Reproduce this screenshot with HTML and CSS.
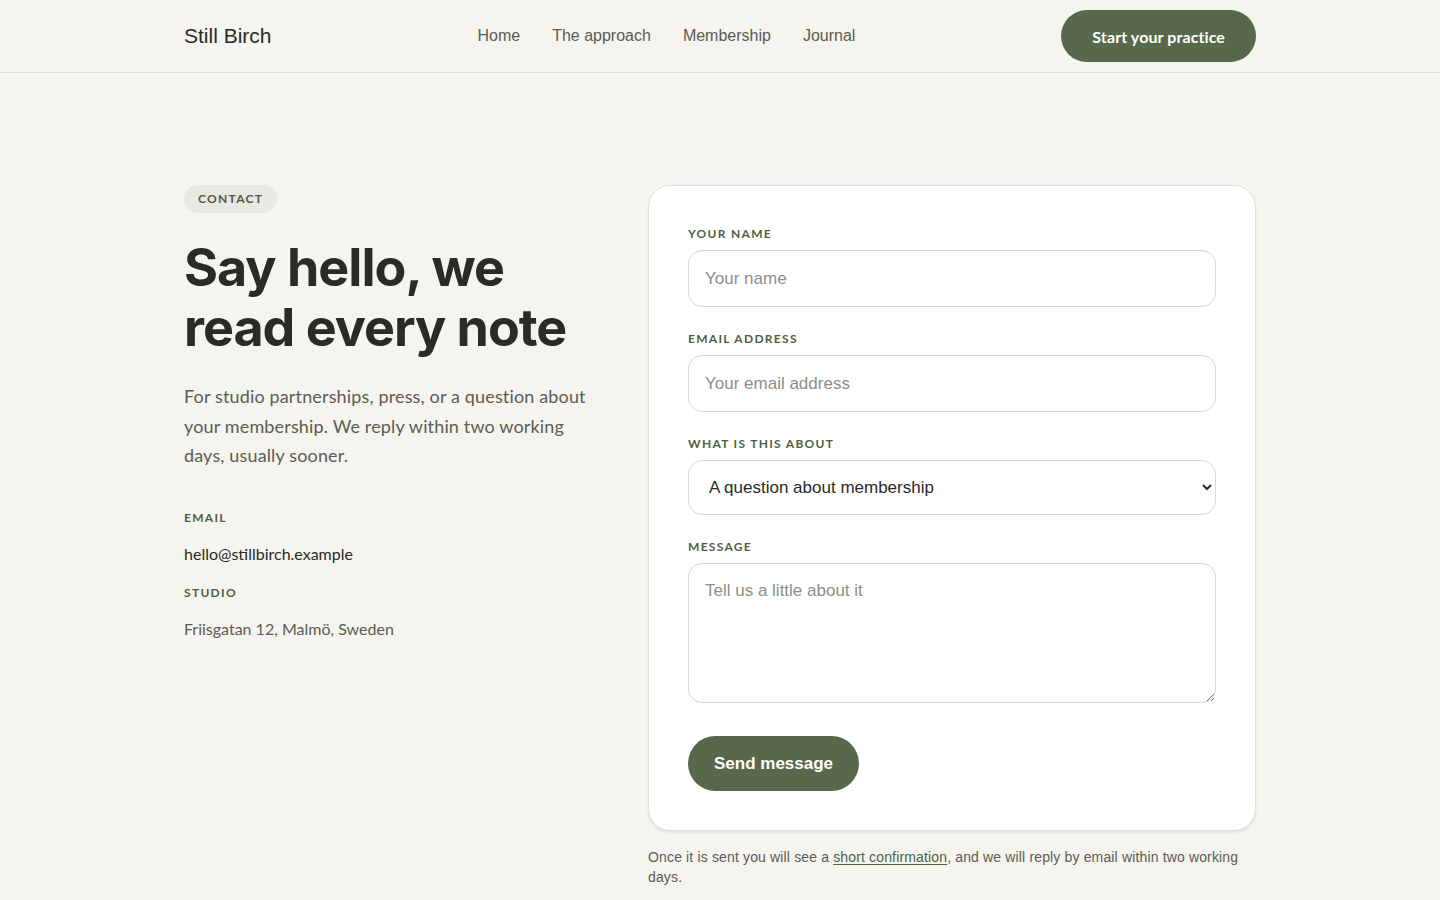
FILE: index.html
```html
<!DOCTYPE html>
<html lang="en">
<head>
    <meta charset="UTF-8">
    <meta name="viewport" content="width=device-width, initial-scale=1.0">
    <title>Contact · Still Birch</title>
    <link rel="stylesheet" href="styles.css">
</head>
<body>
    <header class="site-header">
        <div class="header-inner">
            <a href="#" class="brand">Still Birch</a>
            <nav class="main-nav">
                <a href="#" class="nav-link">Home</a>
                <a href="#" class="nav-link">The approach</a>
                <a href="#" class="nav-link">Membership</a>
                <a href="#" class="nav-link">Journal</a>
            </nav>
            <a href="#" class="btn btn-header">Start your practice</a>
        </div>
    </header>

    <main class="contact">
        <!-- Left: intro and details -->
        <section class="contact-intro">
            <span class="eyebrow">Contact</span>
            <h1 class="contact-title">Say hello, we read every note</h1>
            <p class="contact-lead">For studio partnerships, press, or a question about your membership. We reply within two working days, usually sooner.</p>

            <dl class="contact-details">
                <dt class="detail-label">Email</dt>
                <dd class="detail-value detail-strong">hello@stillbirch.example</dd>
                <dt class="detail-label">Studio</dt>
                <dd class="detail-value">Friisgatan 12, Malmö, Sweden</dd>
            </dl>
        </section>

        <!-- Right: form -->
        <section class="contact-form-wrap">
            <form class="contact-card">
                <div class="field">
                    <label class="field-label" for="name">Your name</label>
                    <input class="field-input" id="name" type="text" placeholder="Your name">
                </div>
                <div class="field">
                    <label class="field-label" for="email">Email address</label>
                    <input class="field-input" id="email" type="email" placeholder="Your email address">
                </div>
                <div class="field">
                    <label class="field-label" for="topic">What is this about</label>
                    <select class="field-input field-select" id="topic">
                        <option>A question about membership</option>
                        <option>Studio partnerships</option>
                        <option>Press</option>
                        <option>Something else</option>
                    </select>
                </div>
                <div class="field">
                    <label class="field-label" for="message">Message</label>
                    <textarea class="field-input field-textarea" id="message" placeholder="Tell us a little about it"></textarea>
                </div>
                <button type="submit" class="btn btn-submit">Send message</button>
            </form>
            <p class="form-note">Once it is sent you will see a <a href="#" class="note-link">short confirmation</a>, and we will reply by email within two working days.</p>
        </section>
    </main>
</body>
</html>
```

FILE: styles.css
```css
/* Reset and base styles */
* {
    margin: 0;
    padding: 0;
    box-sizing: border-box;
}

body {
    background-color: #f5f4ef;
    color: #2b2b26;
    font-family: 'Lato', 'Noto Sans', sans-serif;
}

a {
    text-decoration: none;
    color: inherit;
}

/* Header */
.site-header {
    border-bottom: 1px solid #dddbd3;
}

.header-inner {
    max-width: 1072px;
    margin: 0 auto;
    height: 72px;
    display: flex;
    align-items: center;
    justify-content: space-between;
}

.brand {
    font-family: 'Liberation Sans', sans-serif;
    font-size: 21px;
    color: #2b2b26;
}

.main-nav {
    display: flex;
    gap: 32px;
}

.nav-link {
    font-family: 'Liberation Sans', sans-serif;
    font-size: 16px;
    color: #5c5c54;
}

.btn {
    display: inline-flex;
    align-items: center;
    justify-content: center;
    background-color: #58684a;
    color: #ffffff;
    border: none;
    border-radius: 999px;
    font-weight: 700;
    cursor: pointer;
}

.btn-header {
    height: 52px;
    padding: 0 31px;
    font-size: 16px;
    letter-spacing: 0.1px;
}

/* Main layout */
.contact {
    max-width: 1072px;
    margin: 0 auto;
    padding-top: 112px;
    display: grid;
    grid-template-columns: 416px 608px;
    gap: 48px;
}

.eyebrow {
    display: inline-block;
    padding: 6px 14px;
    background-color: #e9e8e2;
    border-radius: 999px;
    font-size: 12px;
    font-weight: 700;
    letter-spacing: 1.3px;
    text-transform: uppercase;
    color: #4f5a46;
    line-height: 16px;
}

.contact-title {
    font-family: 'Inter', sans-serif;
    font-size: 52px;
    font-weight: 700;
    line-height: 60px;
    letter-spacing: -1px;
    color: #2b2b26;
    margin-top: 25px;
    max-width: 410px;
}

.contact-lead {
    margin-top: 24px;
    font-size: 18px;
    line-height: 29.5px;
    letter-spacing: 0.15px;
    color: #5c5c54;
}

.contact-details {
    margin-top: 38px;
}

.detail-label {
    font-size: 12px;
    font-weight: 700;
    letter-spacing: 1.3px;
    text-transform: uppercase;
    color: #4f5f45;
    line-height: 18px;
}

.detail-value {
    font-size: 16px;
    line-height: 22px;
    color: #5c5c54;
    margin-top: 16px;
    margin-bottom: 19px;
}

.detail-strong {
    color: #2b2b26;
}

/* Form card */
.contact-card {
    background-color: #ffffff;
    border: 1px solid #e2dfd7;
    border-radius: 22px;
    box-shadow: 0 2px 3px rgba(40, 40, 30, 0.08);
    padding: 39px;
    display: flex;
    flex-direction: column;
    gap: 23px;
}

.field {
    display: flex;
    flex-direction: column;
    gap: 7px;
}

.field-label {
    font-size: 12px;
    font-weight: 700;
    letter-spacing: 1.3px;
    text-transform: uppercase;
    color: #4f5f45;
    line-height: 18px;
}

.field-input {
    width: 100%;
    height: 57px;
    padding: 0 16px;
    border: 1px solid #d9d7cf;
    border-radius: 14px;
    background-color: #ffffff;
    font-family: 'Liberation Sans', sans-serif;
    font-size: 17px;
    color: #2b2b26;
}

.field-input::placeholder {
    color: #8e8e88;
}

.field-select {
    height: 55px;
    padding: 0 16px;
    font-size: 17px;
}

.field-textarea {
    height: 140px;
    padding: 16px;
    resize: vertical;
    line-height: 22px;
}

.btn-submit {
    align-self: flex-start;
    height: 55px;
    padding: 0 26px;
    font-family: 'Liberation Sans', sans-serif;
    font-size: 17px;
    margin-top: 10px;
}

.form-note {
    margin-top: 16px;
    font-family: 'Liberation Sans', sans-serif;
    font-size: 14px;
    line-height: 20px;
    letter-spacing: 0.15px;
    color: #5c5c54;
}

.note-link {
    color: #4f5f45;
    text-decoration: underline;
    text-underline-offset: 2px;
    text-decoration-thickness: 1px;
}
```
